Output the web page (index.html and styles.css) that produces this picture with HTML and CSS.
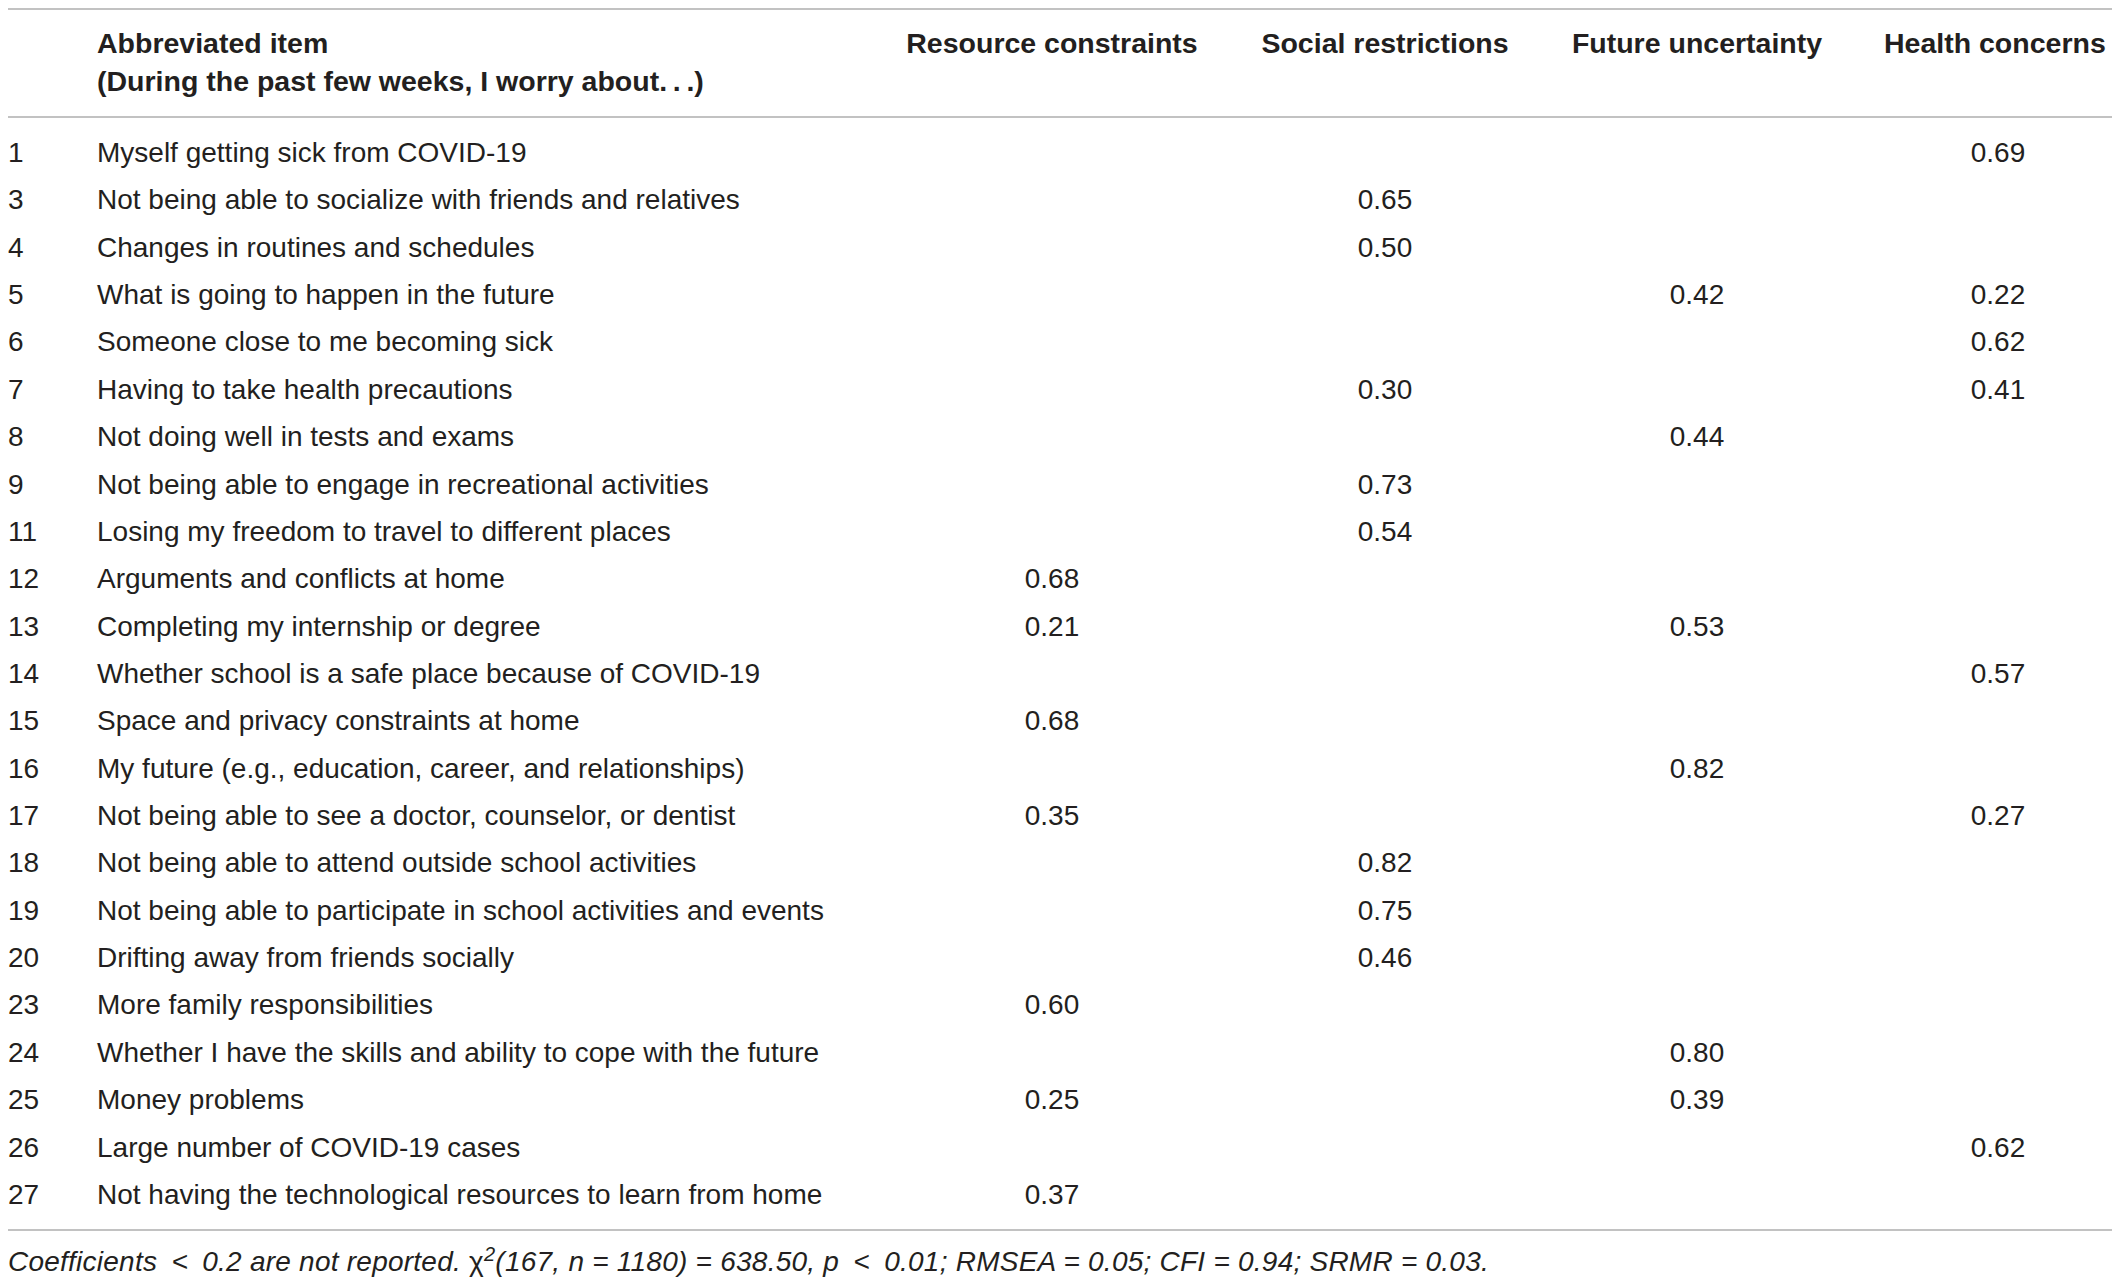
FILE: index.html
```html
<!doctype html>
<html lang="en">
  <head>
    <meta charset="UTF-8" />
    <meta name="viewport" content="width=device-width, initial-scale=1.0" />
    <title>Worry items factor loadings</title>
    <link rel="stylesheet" href="styles.css">
  </head>
  <body>
    <table class="loadings">
      <colgroup>
        <col class="col-num" />
        <col class="col-item" />
        <col class="col-resource" />
        <col class="col-social" />
        <col class="col-future" />
        <col class="col-health" />
      </colgroup>
      <thead>
        <tr>
          <th></th>
          <th class="item">Abbreviated item<br />(During the past few weeks, I worry about.&thinsp;.&thinsp;.)</th>
          <th class="factor">Resource constraints</th>
          <th class="factor">Social restrictions</th>
          <th class="factor">Future uncertainty</th>
          <th class="factor last">Health concerns</th>
        </tr>
      </thead>
      <tbody>
        <tr><td>1</td><td>Myself getting sick from COVID-19</td><td></td><td></td><td></td><td class="last">0.69</td></tr>
        <tr><td>3</td><td>Not being able to socialize with friends and relatives</td><td></td><td>0.65</td><td></td><td class="last"></td></tr>
        <tr><td>4</td><td>Changes in routines and schedules</td><td></td><td>0.50</td><td></td><td class="last"></td></tr>
        <tr><td>5</td><td>What is going to happen in the future</td><td></td><td></td><td>0.42</td><td class="last">0.22</td></tr>
        <tr><td>6</td><td>Someone close to me becoming sick</td><td></td><td></td><td></td><td class="last">0.62</td></tr>
        <tr><td>7</td><td>Having to take health precautions</td><td></td><td>0.30</td><td></td><td class="last">0.41</td></tr>
        <tr><td>8</td><td>Not doing well in tests and exams</td><td></td><td></td><td>0.44</td><td class="last"></td></tr>
        <tr><td>9</td><td>Not being able to engage in recreational activities</td><td></td><td>0.73</td><td></td><td class="last"></td></tr>
        <tr><td>11</td><td>Losing my freedom to travel to different places</td><td></td><td>0.54</td><td></td><td class="last"></td></tr>
        <tr><td>12</td><td>Arguments and conflicts at home</td><td>0.68</td><td></td><td></td><td class="last"></td></tr>
        <tr><td>13</td><td>Completing my internship or degree</td><td>0.21</td><td></td><td>0.53</td><td class="last"></td></tr>
        <tr><td>14</td><td>Whether school is a safe place because of COVID-19</td><td></td><td></td><td></td><td class="last">0.57</td></tr>
        <tr><td>15</td><td>Space and privacy constraints at home</td><td>0.68</td><td></td><td></td><td class="last"></td></tr>
        <tr><td>16</td><td>My future (e.g., education, career, and relationships)</td><td></td><td></td><td>0.82</td><td class="last"></td></tr>
        <tr><td>17</td><td>Not being able to see a doctor, counselor, or dentist</td><td>0.35</td><td></td><td></td><td class="last">0.27</td></tr>
        <tr><td>18</td><td>Not being able to attend outside school activities</td><td></td><td>0.82</td><td></td><td class="last"></td></tr>
        <tr><td>19</td><td>Not being able to participate in school activities and events</td><td></td><td>0.75</td><td></td><td class="last"></td></tr>
        <tr><td>20</td><td>Drifting away from friends socially</td><td></td><td>0.46</td><td></td><td class="last"></td></tr>
        <tr><td>23</td><td>More family responsibilities</td><td>0.60</td><td></td><td></td><td class="last"></td></tr>
        <tr><td>24</td><td>Whether I have the skills and ability to cope with the future</td><td></td><td></td><td>0.80</td><td class="last"></td></tr>
        <tr><td>25</td><td>Money problems</td><td>0.25</td><td></td><td>0.39</td><td class="last"></td></tr>
        <tr><td>26</td><td>Large number of COVID-19 cases</td><td></td><td></td><td></td><td class="last">0.62</td></tr>
        <tr><td>27</td><td>Not having the technological resources to learn from home</td><td>0.37</td><td></td><td></td><td class="last"></td></tr>
      </tbody>
    </table>
    <p class="note">Coefficients&ensp;&lt;&ensp;0.2 are not reported. <span class="chi">&chi;</span><sup>2</sup>(167, n = 1180) = 638.50, p&ensp;&lt;&ensp;0.01; RMSEA = 0.05; CFI = 0.94; SRMR = 0.03.</p>
  </body>
</html>
```

FILE: styles.css
```css
body {
  margin: 8px;
  font-family: "Liberation Sans", Arial, sans-serif;
  color: #231f20;
  background: #fff;
}
.loadings {
  width: 2104px;
  table-layout: fixed;
  border-collapse: collapse;
  font-size: 28px;
}
.col-num {
  width: 89px;
}
.col-item {
  width: 777px;
}
.col-resource {
  width: 356px;
}
.col-social {
  width: 310px;
}
.col-future {
  width: 314px;
}
.col-health {
  width: 258px;
}
.loadings thead tr {
  border-top: 2px solid #c2c2c2;
  border-bottom: 2px solid #c2c2c2;
}
.loadings th {
  font-size: 28.5px;
  font-weight: bold;
  line-height: 38px;
  vertical-align: top;
  text-align: left;
  padding: 14px 0 16px;
  white-space: nowrap;
}
.loadings th.factor,
.loadings td {
  padding-left: 30px;
  padding-right: 30px;
}
.loadings th.factor {
  text-align: center;
}
.loadings td {
  line-height: 47.36px;
  padding-top: 0;
  padding-bottom: 0;
  text-align: center;
  white-space: nowrap;
}
.loadings td:nth-child(1),
.loadings td:nth-child(2) {
  text-align: left;
  padding-left: 0;
  padding-right: 0;
}
.loadings .last {
  padding-right: 0;
}
.loadings tbody tr:first-child td {
  padding-top: 11px;
}
.loadings tbody tr:last-child td {
  padding-bottom: 11px;
}
.loadings tbody {
  border-bottom: 2px solid #c2c2c2;
}
.note {
  margin: 14px 0 0;
  font-size: 28px;
  line-height: 34px;
  font-style: italic;
  letter-spacing: 0.24px;
}
.note .chi {
  font-style: normal;
}
.note sup {
  font-size: 20px;
  line-height: 0;
  vertical-align: 10px;
}
```
